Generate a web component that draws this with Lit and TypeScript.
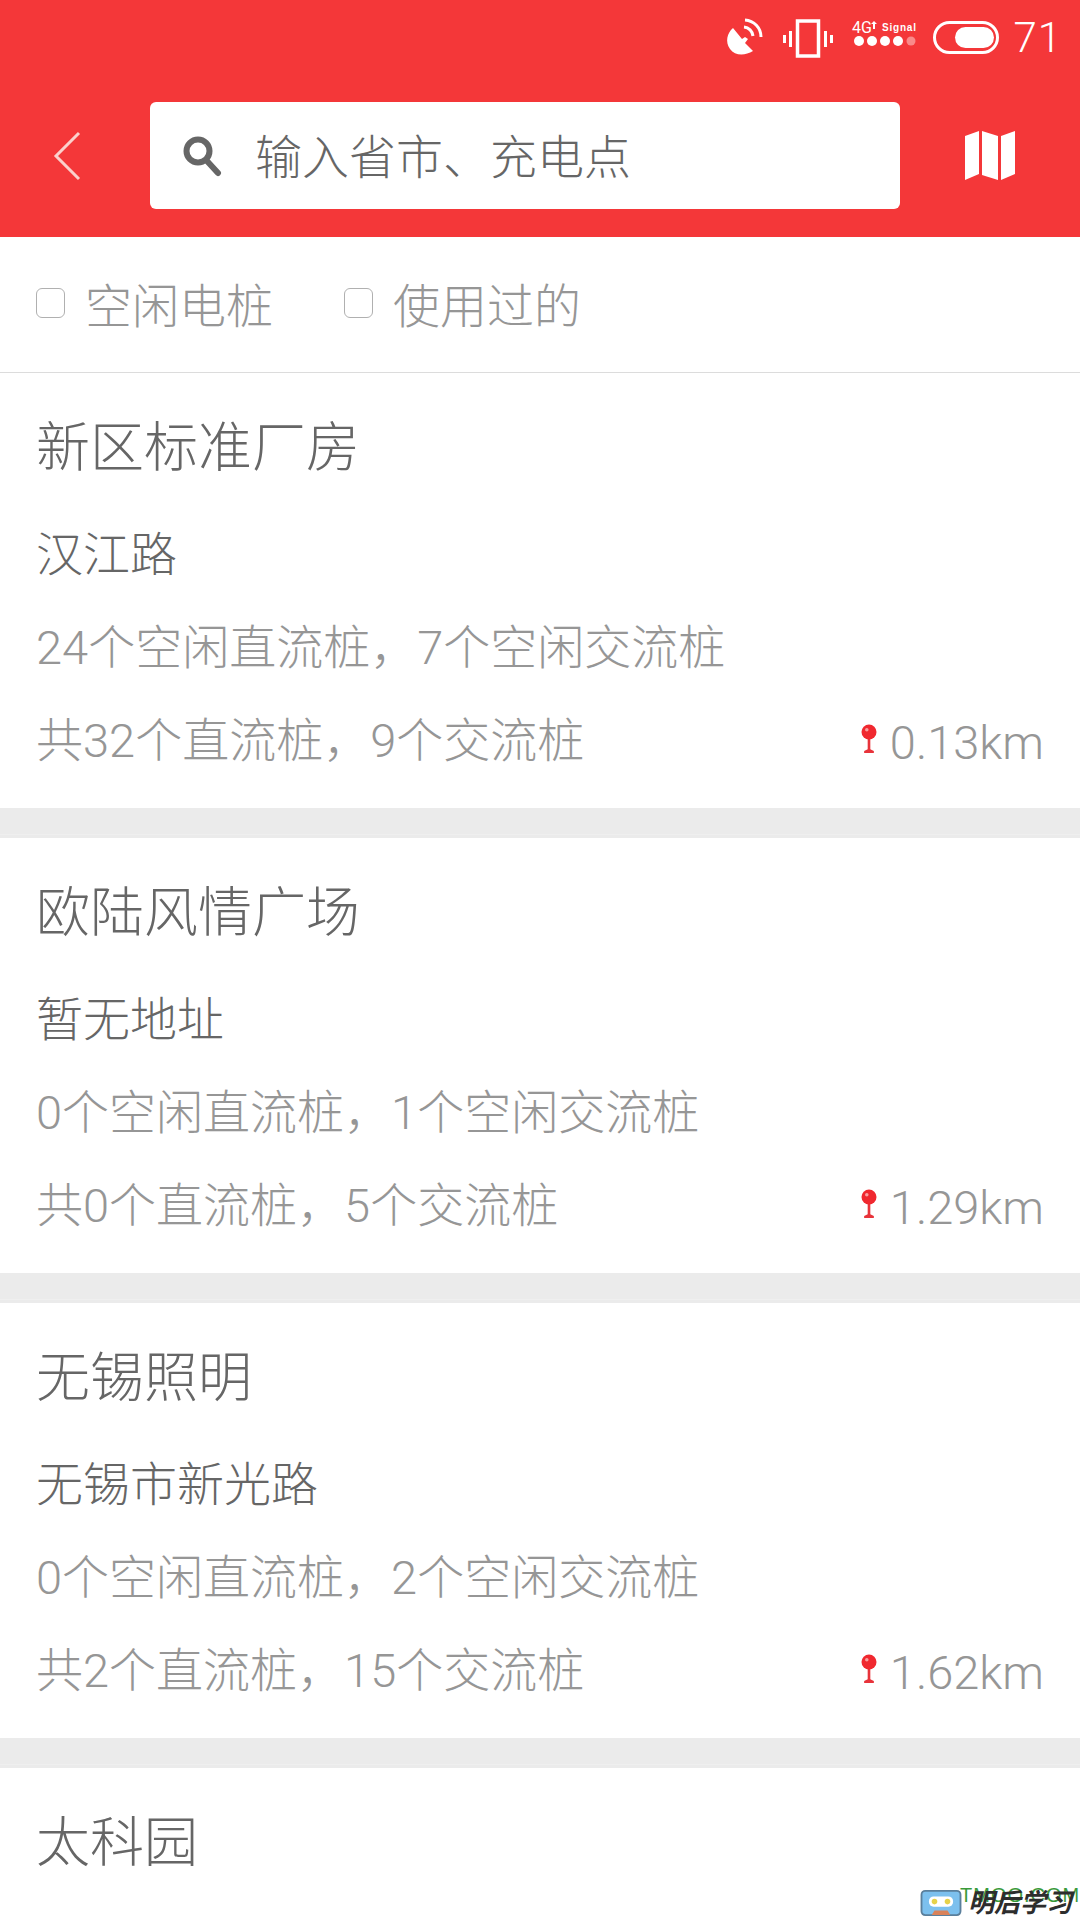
import { LitElement, html, css, svg } from "lit";
import { customElement } from "lit/decorators.js";

const stations = [
  { name: "新区标准厂房", addr: "汉江路", free: "24个空闲直流桩，7个空闲交流桩", total: "共32个直流桩，9个交流桩", dist: "0.13km" },
  { name: "欧陆风情广场", addr: "暂无地址", free: "0个空闲直流桩，1个空闲交流桩", total: "共0个直流桩，5个交流桩", dist: "1.29km" },
  { name: "无锡照明", addr: "无锡市新光路", free: "0个空闲直流桩，2个空闲交流桩", total: "共2个直流桩，15个交流桩", dist: "1.62km" },
];

const pin = svg`<svg class="pin" viewBox="0 0 18 34" width="16" height="30">
  <path d="M7.500 15h3v13.500l4 2v2.500H3.500v-2.500l4-2z" fill="#e8333a"/>
  <circle cx="9" cy="9" r="8.500" fill="#f0282f"/>
  <circle cx="6.500" cy="6.500" r="2" fill="#f8a0a0"/>
</svg>`;

@customElement("app-root")
export class AppRoot extends LitElement {
  static styles = css`
    :host {
      display: block;
      position: relative;
      width: 1080px;
      height: 1920px;
      overflow: hidden;
      background: #fff;
      font-family: Roboto, "Noto Sans CJK SC", sans-serif;
    }
    .top { background: #f43739; height: 237px; display: flex; flex-direction: column; }
    .status { height: 102px; display: flex; justify-content: flex-end; align-items: flex-start; color: #fff; padding: 16px 18px 0 0; box-sizing: border-box; }
    .status svg { display: block; }
    .s-gap1 { margin-right: 20px; margin-top: 2px; }
    .s-gap2 { margin-right: 18px; margin-top: 3px; }
    .s-gap3 { margin-right: 16px; margin-top: 3px; }
    .s-gap4 { margin-right: 14px; margin-top: 5px; }
    .level { font-size: 42px; line-height: 42px; font-weight: 300; margin-top: 1px; letter-spacing: 1px; }
    .bar { display: flex; align-items: center; height: 107px; }
    .back { width: 150px; padding-left: 52px; box-sizing: border-box; display: flex; }
    .search { width: 750px; height: 107px; background: #fff; border-radius: 6px; display: flex; align-items: center; padding-left: 32px; box-sizing: border-box; gap: 33px; color: #666; font-size: 47px; font-weight: 300; }
    .search span { margin-top: -5px; }
    .map { flex: 1; display: flex; justify-content: center; }
    .filters { height: 135px; display: flex; align-items: center; padding-left: 36px; border-bottom: 1px solid #dcdcdc; box-sizing: content-box; color: #969696; font-size: 47px; font-weight: 300; }
    .filter { display: flex; align-items: center; margin-right: 71px; gap: 20px; }
    .filter span:last-child { margin-top: -5px; }
    .box { width: 29px; height: 30px; border: 1.5px solid #b0b0b0; border-radius: 6px; box-sizing: border-box; margin-top: -3px; }
    .card { background: #fff; height: 435px; padding: 0 36px; display: flex; flex-direction: column; box-sizing: border-box; }
    .sep { height: 30px; background: linear-gradient(#ebebeb 0 26px, #efefef 26px 27px, #ebebeb 27px); }
    .name { font-size: 54px; line-height: 72px; margin-top: 40px; color: #666; font-weight: 300; }
    .addr { font-size: 47px; line-height: 60px; margin-top: 40px; color: #666; font-weight: 300; }
    .free { font-size: 47px; line-height: 60px; margin-top: 33px; color: #969696; font-weight: 300; }
    .row { display: flex; justify-content: space-between; align-items: center; margin-top: 31px; line-height: 60px; color: #969696; font-size: 47px; font-weight: 300; }
    .dist { display: flex; align-items: center; gap: 13px; font-size: 47px; color: #969696; font-weight: 300; margin-top: 4px; }
    .pin { margin-top: -8px; }
    .mark { position: absolute; right: 0; bottom: 4px; height: 30px; width: 160px; }
    .mark svg { position: absolute; left: 0; bottom: 0; }
    .mark .t { position: absolute; left: 40px; top: -3px; font-size: 20px; line-height: 24px; color: #3a9a3a; letter-spacing: 1px; font-family: "Liberation Sans", sans-serif; }
    .mark .u { position: absolute; left: 48px; top: 3px; font-size: 26px; line-height: 28px; font-weight: 700; font-style: italic; color: #2d2d2d; white-space: nowrap; }
  `;

  render() {
    return html`
      <div class="top">
        <div class="status">
          <svg class="s-gap1" width="40" height="40" viewBox="0 0 40 40" fill="none">
            <path d="M10 10 C4 15 2 24 7 31 C12 38 22 38 30 33 L22 25 L25 21 L22 19 L19 21 Z" fill="#fff"/>
            <path d="M21 9 a10 10 0 0 1 9 9" stroke="#fff" stroke-width="3"/>
            <path d="M22 2 a17 17 0 0 1 16 17" stroke="#fff" stroke-width="3"/>
          </svg>
          <svg class="s-gap2" width="50" height="40" viewBox="0 0 50 40" fill="none" stroke="#fff">
            <rect x="14.500" y="2" width="21" height="35" stroke-width="3.500"/>
            <path d="M7.500 12v16M1.500 16v8M42.500 12v16M48.500 16v8" stroke-width="3"/>
          </svg>
          <svg class="s-gap3" width="66" height="36" viewBox="0 0 66 36">
            <text x="1" y="14" font-size="16" font-family="Roboto" fill="#fff">4G</text>
            <path d="M23 2l3 3h-2v5h-2V5h-2z" fill="#fff"/>
            <text x="31" y="12" font-size="10" font-weight="700" letter-spacing=".8" font-family="Liberation Sans" fill="#fff">Signal</text>
            <g fill="#fff"><circle cx="8" cy="22" r="5"/><circle cx="21" cy="22" r="5"/><circle cx="34" cy="22" r="5"/><circle cx="47" cy="22" r="5"/></g>
            <circle cx="60" cy="22" r="4.500" fill="#f98a8a"/>
          </svg>
          <svg class="s-gap4" width="66" height="34" viewBox="0 0 66 34">
            <rect x="1.500" y="1.500" width="63" height="30" rx="15" fill="none" stroke="#fff" stroke-width="3"/>
            <rect x="22" y="6" width="39" height="21" rx="10.500" fill="#fff"/>
          </svg>
          <span class="level">71</span>
        </div>
        <div class="bar">
          <div class="back">
            <svg width="30" height="50" viewBox="0 0 30 50" fill="none"><path d="M27 2 L4 25 L27 48" stroke="#fbd0cc" stroke-width="3"/></svg>
          </div>
          <div class="search">
            <svg width="40" height="42" viewBox="0 0 40 42" fill="none" stroke="#666">
              <circle cx="16" cy="16" r="11.500" stroke-width="6"/>
              <path d="M25 26 L36 38" stroke-width="6" stroke-linecap="round"/>
            </svg>
            <span>输入省市、充电点</span>
          </div>
          <div class="map">
            <svg width="52" height="52" viewBox="0 0 52 52" fill="#fff">
              <path d="M1 6 L15 1 V44 L1 50 Z"/>
              <path d="M18 1 L34 6 V50 L18 45 Z"/>
              <path d="M37 6 L51 1 V44 L37 50 Z"/>
            </svg>
          </div>
        </div>
      </div>
      <div class="filters">
        <div class="filter"><span class="box"></span><span>空闲电桩</span></div>
        <div class="filter"><span class="box"></span><span>使用过的</span></div>
      </div>
      ${stations.map((s) => html`
        <div class="card">
          <div class="name">${s.name}</div>
          <div class="addr">${s.addr}</div>
          <div class="free">${s.free}</div>
          <div class="row"><span>${s.total}</span><span class="dist">${pin}${s.dist}</span></div>
        </div>
        <div class="sep"></div>`)}
      <div class="card"><div class="name">太科园</div></div>
      <div class="mark">
        <svg width="42" height="26" viewBox="0 0 44 28">
          <rect x="1" y="1" width="42" height="26" rx="4" fill="#7cc0ee" stroke="#5a7f9c" stroke-width="2"/>
          <rect x="9" y="7" width="26" height="11" rx="5" fill="#fff"/>
          <circle cx="15" cy="12.500" r="3" fill="#e6d24a"/><circle cx="29" cy="12.500" r="3" fill="#e6d24a"/>
          <path d="M12 27 l3-5 h14 l3 5z" fill="#d9825a"/>
        </svg>
        <span class="t">TMOO.COM</span>
        <span class="u">明后学习</span>
      </div>
    `;
  }
}
